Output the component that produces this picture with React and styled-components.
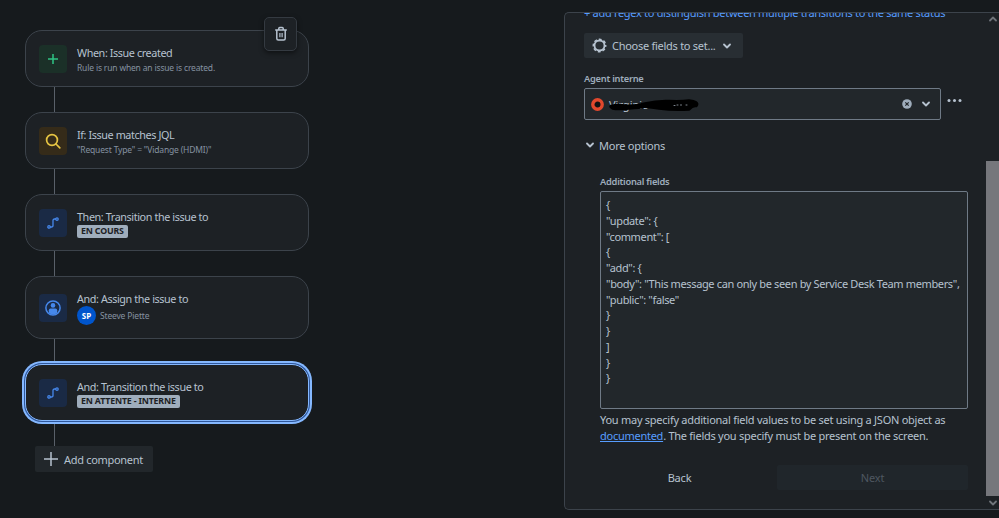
import React, { useState } from 'react';
import styled, { createGlobalStyle, css } from 'styled-components';

const GlobalStyle = createGlobalStyle`
  :root {
    --page: #161a1d;
    --surface: #1d2125;
    --input: #22272b;
    --button: #22272b;
    --line: #3c434b;
    --field-line: #6f7a86;
    --text: #b6c2cf;
    --text-subtle: #8592a1;
    --link: #579dff;
  }
  * {
    box-sizing: border-box;
  }
  body {
    margin: 0;
    overflow: hidden;
    background: var(--page);
    color: var(--text);
    font-family: 'Noto Sans', 'Open Sans', sans-serif;
    font-size: 11px;
  }
  button, textarea {
    margin: 0;
    padding: 0;
    border: 0;
    color: inherit;
    font: inherit;
    letter-spacing: inherit;
  }
  p, h3 {
    margin: 0;
  }
`;

const tones = {
  green: { color: '#2fc384', background: '#1b3028' },
  yellow: { color: '#e6c443', background: '#352b19' },
  blue: { color: '#4688ec', background: '#1a2a45' },
};

const Styled = {
  Page: styled.main`
    display: flex;
    justify-content: space-between;
    width: 999px;
    height: 518px;
    overflow: hidden;
  `,
  Flow: styled.section`
    display: flex;
    flex-flow: column;
    align-items: flex-start;
    padding: 30px 0 0 25px;
  `,
  Card: styled.article`
    display: flex;
    position: relative;
    align-items: center;
    width: 284px;
    height: ${({ $tall }) => ($tall ? 63 : 57)}px;
    padding-left: 13px;
    border: 1px solid var(--line);
    border-radius: 17px;
    background: var(--surface);
    ${({ $selected }) => $selected && css`
      border-color: #85b8ff;
      box-shadow: 0 0 0 1px #2f579b, 0 0 0 3px #85b8ff;
    `}
  `,
  Tile: styled.div`
    display: flex;
    align-items: center;
    justify-content: center;
    width: 28px;
    height: 28px;
    margin-right: 10px;
    border-radius: 4px;
    color: ${({ $tone }) => tones[$tone].color};
    background: ${({ $tone }) => tones[$tone].background};
  `,
  CardText: styled.div`
    display: flex;
    flex-flow: column;
    align-items: flex-start;
    padding-top: ${({ $shift }) => $shift}px;
  `,
  CardTitle: styled.h3`
    font-size: 10.8px;
    font-weight: normal;
    line-height: 15px;
    letter-spacing: -0.4px;
    white-space: nowrap;
  `,
  CardNote: styled.p`
    color: var(--text-subtle);
    font-size: 8.5px;
    line-height: 16px;
    letter-spacing: -0.17px;
    white-space: nowrap;
  `,
  Lozenge: styled.span`
    height: 13px;
    margin-top: 1px;
    padding: 0 4px;
    border-radius: 2px;
    background: #9fadbc;
    color: #1d2125;
    font-size: 8.8px;
    font-weight: bold;
    line-height: 13px;
    letter-spacing: -0.17px;
    white-space: nowrap;
  `,
  Assignee: styled.div`
    display: flex;
    align-items: center;
    gap: 4px;
  `,
  Avatar: styled.span`
    width: 19px;
    height: 19px;
    border-radius: 50%;
    background: #0055cc;
    color: #fff;
    font-size: 8px;
    font-weight: bold;
    line-height: 19px;
    text-align: center;
  `,
  Connector: styled.div`
    width: 1px;
    height: 25px;
    margin-left: 29px;
    background: #596069;
  `,
  DeleteButton: styled.button`
    display: flex;
    position: absolute;
    top: -14px;
    right: 11px;
    align-items: center;
    justify-content: center;
    width: 33px;
    height: 34px;
    border: 1px solid #343a41;
    border-radius: 5px;
    background: #1d2125;
    box-shadow: 0 2px 5px rgba(0, 0, 0, 0.5);
  `,
  AddButton: styled.button`
    display: flex;
    align-items: center;
    gap: 6px;
    width: 118px;
    height: 26px;
    margin-left: 10px;
    padding-left: 9px;
    border-radius: 2px;
    background: var(--button);
    letter-spacing: -0.3px;
  `,
  Panel: styled.section`
    display: flex;
    width: 435px;
    height: 498px;
    margin-top: 12px;
    overflow: hidden;
    border: solid var(--line);
    border-width: 1px 0 1px 1px;
    border-radius: 5px 0 0 5px;
    background: var(--surface);
  `,
  Form: styled.div`
    display: flex;
    flex: 1;
    flex-flow: column;
    align-items: flex-start;
    padding-left: 19px;
  `,
  RegexLink: styled.a`
    margin-top: -8px;
    color: var(--link);
    line-height: 16px;
    letter-spacing: -0.3px;
    white-space: nowrap;
  `,
  ChooseButton: styled.button`
    display: flex;
    align-items: center;
    width: 159px;
    height: 25px;
    margin-top: 12px;
    padding: 0 12px 0 8px;
    border-radius: 2px;
    background: #282e33;
    letter-spacing: -0.27px;
    span {
      flex: 1;
      margin-left: 5px;
      text-align: left;
      white-space: nowrap;
    }
  `,
  Label: styled.label`
    margin-top: ${({ $top }) => $top}px;
    color: #9fadbc;
    font-size: 9.3px;
    font-weight: 600;
    line-height: 14px;
    letter-spacing: -0.25px;
  `,
  SelectRow: styled.div`
    display: flex;
    gap: 6px;
    margin-top: 2px;
  `,
  Select: styled.div`
    display: flex;
    align-items: center;
    gap: 10px;
    width: 357px;
    height: 32px;
    padding: 0 10px 0 6px;
    border: 1px solid var(--field-line);
    border-radius: 2px;
    background: var(--input);
  `,
  SelectValue: styled.div`
    display: flex;
    position: relative;
    flex: 1;
    align-items: center;
    gap: 5px;
  `,
  Scribble: styled.svg`
    position: absolute;
    top: 0;
    left: 16px;
  `,
  Toggle: styled.button`
    display: flex;
    align-items: center;
    gap: 5px;
    height: 16px;
    margin: 17px 0 0 2px;
    background: none;
    letter-spacing: -0.25px;
  `,
  Options: styled.div`
    display: flex;
    flex-flow: column;
    width: 368px;
    margin-left: 16px;
  `,
  Json: styled.textarea`
    height: 218px;
    margin-top: 2px;
    padding: 5px 5px;
    overflow: hidden;
    border: 1px solid var(--field-line);
    border-radius: 2px;
    outline: none;
    background: var(--input);
    line-height: 15.75px;
    letter-spacing: -0.36px;
    white-space: pre;
    resize: none;
  `,
  Help: styled.p`
    margin-top: 3px;
    line-height: 16px;
    letter-spacing: -0.26px;
    white-space: nowrap;
    a {
      color: var(--link);
      text-decoration: underline;
    }
  `,
  Actions: styled.div`
    display: flex;
    gap: 2px;
    width: 384px;
    margin-top: 21px;
  `,
  Action: styled.button`
    flex: 1;
    height: 25px;
    border-radius: 2px;
    background: none;
    letter-spacing: -0.2px;
    &:disabled {
      background: #20262b;
      color: #4e5760;
    }
  `,
  Scrollbar: styled.div`
    display: flex;
    flex-flow: column;
    align-items: center;
    width: 13px;
    padding: 2px 0 2px;
    color: #6f747a;
  `,
  Thumb: styled.div`
    width: 13px;
    height: 335px;
    margin: auto 0 3px;
    background: #76777c;
  `,
};

const Chevron = ({ size = 8, up }) => (
  <svg width={size} height={size} viewBox="0 0 8 8" fill="none" stroke="currentColor" strokeWidth="1.8">
    <path d={up ? 'M1 5.5 4 2.5 7 5.5' : 'M1 2.5 4 5.5 7 2.5'} strokeLinecap="round" strokeLinejoin="round" />
  </svg>
);

const icons = {
  plus: (
    <svg width="12" height="12" viewBox="0 0 12 12" stroke="currentColor" strokeWidth="1.5">
      <path d="M6 1v10M1 6h10" />
    </svg>
  ),
  search: (
    <svg width="16" height="16" viewBox="0 0 16 16" fill="none" stroke="currentColor" strokeWidth="1.7">
      <circle cx="7" cy="7" r="5.4" />
      <path d="m11 11 3.8 3.8" strokeLinecap="round" />
    </svg>
  ),
  transition: (
    <svg width="12" height="12" viewBox="0 0 12 12" fill="none" stroke="currentColor" strokeWidth="1.3">
      <path d="M3 10h1.5Q6 10 6 8.5v-5Q6 2 7.5 2H9" />
      <circle cx="2" cy="9.900" r="1.200" />
      <circle cx="10" cy="2.100" r="1.200" />
    </svg>
  ),
  person: (
    <svg width="16" height="16" viewBox="0 0 16 16">
      <circle cx="8" cy="8" r="7.100" fill="none" stroke="currentColor" strokeWidth="1.500" />
      <circle cx="8" cy="5.400" r="2.300" fill="currentColor" />
      <path d="M3.800 13V10.200Q3.800 8.500 5.500 8.500h5Q12.200 8.500 12.200 10.200V13Q8 16 3.800 13Z" fill="currentColor" />
    </svg>
  ),
};

const TrashIcon = () => (
  <svg width="14" height="16" viewBox="0 0 14 16" fill="none" stroke="currentColor" strokeWidth="1.500">
    <path d="M1.200 4h11.600M4.800 3.500V2.400Q4.800 1.500 5.700 1.500h2.600Q9.200 1.500 9.200 2.400V3.500M2.800 4v8.500Q2.800 14 4.300 14h5.400Q11.200 14 11.200 12.500V4" />
    <path d="M5.900 7v4.200M8.100 7v4.200" strokeWidth="1.200" />
  </svg>
);

const GearIcon = () => (
  <svg width="15" height="15" viewBox="0 0 15 15" fill="none" stroke="currentColor">
    <circle cx="7.500" cy="7.500" r="5" strokeWidth="1.800" />
    <circle cx="7.500" cy="7.500" r="6.200" strokeWidth="1.500" strokeDasharray="2.900 1.969" strokeDashoffset="1.450" />
  </svg>
);

const ClearIcon = () => (
  <svg width="10" height="10" viewBox="0 0 10 10">
    <circle cx="5" cy="5" r="4.800" fill="#9fadbc" />
    <path d="m3.300 3.300 3.400 3.400m0-3.400L3.300 6.700" stroke="#22272b" strokeWidth="1.200" />
  </svg>
);

const MoreIcon = () => (
  <svg width="15" height="25" viewBox="0 0 15 25" fill="currentColor">
    <circle cx="2" cy="12.500" r="1.500" />
    <circle cx="7.500" cy="12.500" r="1.500" />
    <circle cx="13" cy="12.500" r="1.500" />
  </svg>
);

const steps = [
  { title: 'When: Issue created', icon: 'plus', tone: 'green', note: 'Rule is run when an issue is created.' },
  { title: 'If: Issue matches JQL', icon: 'search', tone: 'yellow', note: '"Request Type" = "Vidange (HDMI)"' },
  { title: 'Then: Transition the issue to', icon: 'transition', tone: 'blue', status: 'EN COURS' },
  { title: 'And: Assign the issue to', icon: 'person', tone: 'blue', assignee: 'Steeve Piette' },
  { title: 'And: Transition the issue to', icon: 'transition', tone: 'blue', status: 'EN ATTENTE - INTERNE' },
];

const defaultJson = `{
"update": {
"comment": [
{
"add": {
"body": "This message can only be seen by Service Desk Team members",
"public": "false"
}
}
]
}
}`;

function Step({ step, selected, deletable }) {
  return (
    <>
      <Styled.Card $tall={!!step.assignee} $selected={selected}>
        <Styled.Tile $tone={step.tone}>{icons[step.icon]}</Styled.Tile>
        <Styled.CardText $shift={step.note ? 4 : 1}>
          <Styled.CardTitle>{step.title}</Styled.CardTitle>
          {step.note && <Styled.CardNote>{step.note}</Styled.CardNote>}
          {step.status && <Styled.Lozenge>{step.status}</Styled.Lozenge>}
          {step.assignee && (
            <Styled.Assignee>
              <Styled.Avatar>SP</Styled.Avatar>
              <Styled.CardNote>{step.assignee}</Styled.CardNote>
            </Styled.Assignee>
          )}
        </Styled.CardText>
        {deletable && (
          <Styled.DeleteButton aria-label="Delete">
            <TrashIcon />
          </Styled.DeleteButton>
        )}
      </Styled.Card>
      <Styled.Connector />
    </>
  );
}

function TransitionForm() {
  const [json, setJson] = useState(defaultJson);

  return (
    <Styled.Panel>
      <Styled.Form>
        <Styled.RegexLink>+ add regex to distinguish between multiple transitions to the same status</Styled.RegexLink>
        <Styled.ChooseButton>
          <GearIcon />
          <span>Choose fields to set...</span>
          <Chevron />
        </Styled.ChooseButton>
        <Styled.Label $top={14}>Agent interne</Styled.Label>
        <Styled.SelectRow>
          <Styled.Select>
            <Styled.SelectValue>
              <svg width="13" height="13" viewBox="0 0 13 13">
                <circle cx="6.500" cy="6.500" r="4.700" fill="#101214" stroke="#e2482d" strokeWidth="3.400" />
              </svg>
              <span>Virginie</span>
              <Styled.Scribble width="94" height="16" viewBox="0 0 94 16" strokeLinejoin="round" strokeLinecap="round">
                <path d="M4 9.500Q10 8 18 9T38 7T62 4.500T82 4Q92 5 89 8.500Q85 8 82 12Q66 13 52 11T36 9.500T22 11T6 11Z" stroke="#000" strokeWidth="3.500" />
                <path d="M67 8.500h1M70 8h1M73.500 8h1M79 8h1" stroke="#8c959f" strokeWidth="0.900" />
              </Styled.Scribble>
            </Styled.SelectValue>
            <ClearIcon />
            <Chevron />
          </Styled.Select>
          <MoreIcon />
        </Styled.SelectRow>
        <Styled.Toggle>
          <Chevron />
          More options
        </Styled.Toggle>
        <Styled.Options>
          <Styled.Label $top={22} htmlFor="additional-fields">Additional fields</Styled.Label>
          <Styled.Json
            id="additional-fields"
            spellCheck={false}
            value={json}
            onChange={e => setJson(e.target.value)}
          />
          <Styled.Help>
            You may specify additional field values to be set using a JSON object as
            <br />
            <a>documented</a>
            . The fields you specify must be present on the screen.
          </Styled.Help>
        </Styled.Options>
        <Styled.Actions>
          <Styled.Action>Back</Styled.Action>
          <Styled.Action disabled>Next</Styled.Action>
        </Styled.Actions>
      </Styled.Form>
      <Styled.Scrollbar>
        <Chevron up />
        <Styled.Thumb />
        <Chevron />
      </Styled.Scrollbar>
    </Styled.Panel>
  );
}

function App() {
  return (
    <Styled.Page>
      <GlobalStyle />
      <Styled.Flow>
        {steps.map((step, i) => (
          <Step key={step.title} step={step} deletable={i === 0} selected={i === steps.length - 1} />
        ))}
        <Styled.AddButton>
          <svg width="14" height="14" viewBox="0 0 14 14" stroke="currentColor" strokeWidth="1.500">
            <path d="M7 0v14M0 7h14" />
          </svg>
          Add component
        </Styled.AddButton>
      </Styled.Flow>
      <TransitionForm />
    </Styled.Page>
  );
}

export default App;
